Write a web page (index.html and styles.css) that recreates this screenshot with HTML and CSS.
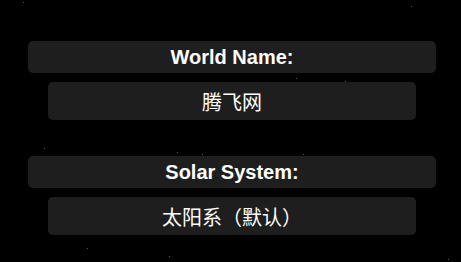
FILE: index.html
```html
<!DOCTYPE html>
<html lang="zh-CN">
<head>
<meta charset="utf-8">
<link rel="stylesheet" href="styles.css">
</head>
<body>
<div class="sky">
  <span class="star" style="left:23px;top:2px"></span>
  <span class="star" style="left:411px;top:6px"></span>
  <span class="star" style="left:296px;top:78px"></span>
  <span class="star" style="left:345px;top:81px"></span>
  <span class="star" style="left:44px;top:148px"></span>
  <span class="star" style="left:177px;top:152px"></span>
  <span class="star" style="left:202px;top:154px"></span>
  <span class="star" style="left:303px;top:154px"></span>
  <span class="star" style="left:87px;top:248px"></span>
  <span class="star" style="left:169px;top:256px"></span>
  <span class="star" style="left:448px;top:259px"></span>
</div>
<main class="panel">
  <section class="field">
    <div class="label">World Name:</div>
    <div class="value">腾飞网</div>
  </section>
  <section class="field">
    <div class="label">Solar System:</div>
    <div class="value">太阳系（默认）</div>
  </section>
</main>
</body>
</html>
```
FILE: styles.css
```css
html, body {
  margin: 0;
  padding: 0;
  background: #000;
  width: 461px;
  height: 262px;
  overflow: hidden;
}
body {
  position: relative;
  color: #fff;
  font-family: "Liberation Sans", "Noto Sans CJK SC", sans-serif;
}
.sky {
  position: absolute;
  inset: 0;
}
.star {
  position: absolute;
  width: 1px;
  height: 1px;
  background: #555a66;
}
.panel {
  position: relative;
  display: flex;
  flex-direction: column;
  gap: 36px;
  padding-top: 41px;
}
.field {
  display: flex;
  flex-direction: column;
  gap: 9px;
}
.label {
  margin: 0 25px 0 28px;
  height: 32px;
  background: #1e1e1e;
  border-radius: 5px;
  display: flex;
  align-items: center;
  justify-content: center;
  font-weight: bold;
  font-size: 20px;
}
.value {
  margin: 0 45px 0 48px;
  height: 38px;
  background: #1e1e1e;
  border-radius: 5px;
  display: flex;
  align-items: center;
  justify-content: center;
  font-family: "Noto Sans CJK SC", "Liberation Sans", sans-serif;
  font-size: 20px;
}
```
